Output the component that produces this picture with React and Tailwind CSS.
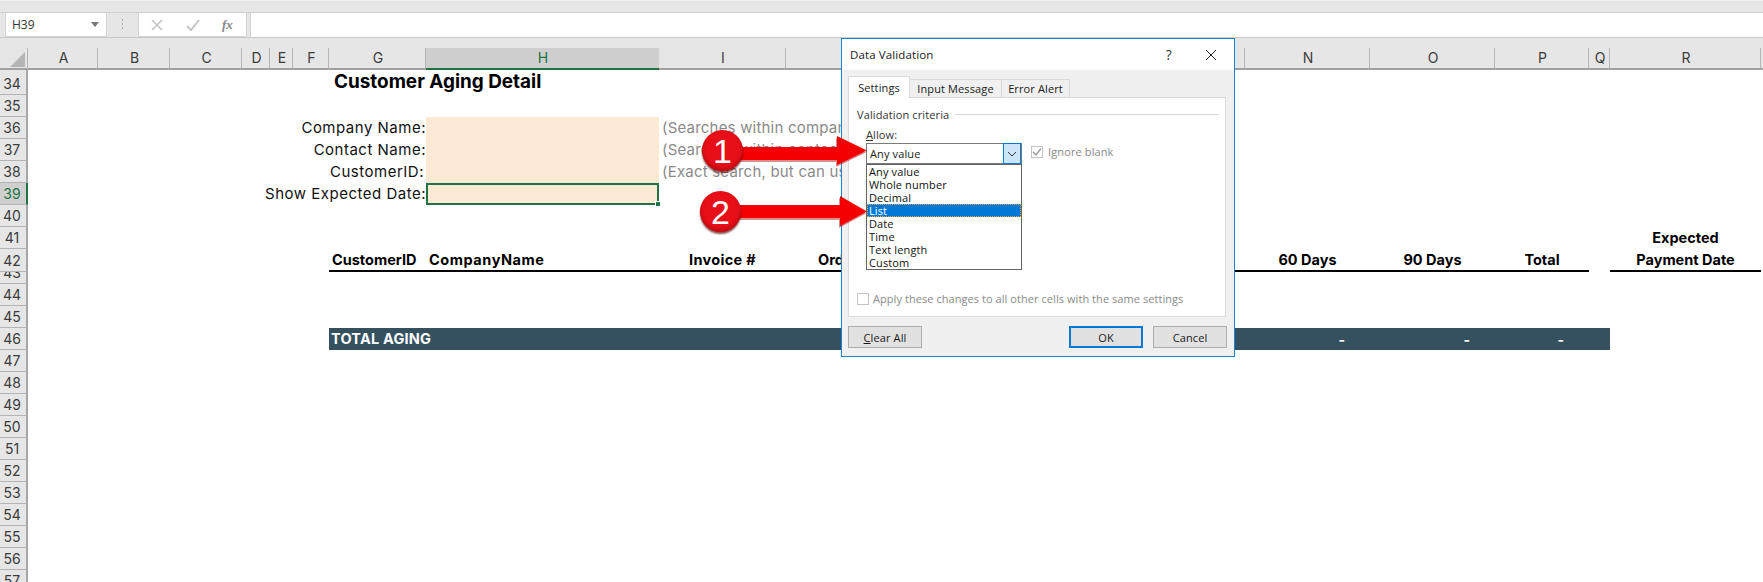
const COLS = [
  ["A", ""], ["B", ""], ["C", ""], ["D", ""], ["E", ""], ["F", ""], ["G", ""], ["H", "sel"], ["I", ""],
  ["J", ""], ["K", ""], ["L", ""], ["M", ""], ["N", ""], ["O", ""], ["P", ""], ["Q", ""], ["R", ""], ["", ""],
];
const ROWS = Array.from({ length: 24 }, (_, i) => 34 + i);
const sheetFont = "font-['Inter','Liberation_Sans',sans-serif]";
const dlgFont = "font-['Open_Sans','Liberation_Sans',sans-serif]";

function rowH(n) {
  if (n === 34) return "h-[25px]";
  if (n === 42) return "h-[23px]";
  if (n === 43) return "h-[12px]";
  return "h-[22px]";
}

function ColumnHeaders() {
  return (
    <div className="grid h-[22px] grid-cols-[28px_70px_72px_72px_28px_23px_36px_97px_233px_127px_124px_124px_124px_87px_125px_125px_94px_21px_151px_1fr] bg-[#e6e6e6]">
      <div className="relative border-r border-b-2 border-r-[#b4b4b4] border-b-[#a0a0a0]">
        <svg width="16" height="16" className="absolute left-[10px] top-[4px]">
          <polygon points="15,0 15,15 0,15" fill="#b4b4b4" />
        </svg>
      </div>
      {COLS.map(([c, s], i) => (
        <div
          key={i}
          className={
            s
              ? "flex items-center justify-center border-b-2 border-b-[#217346] bg-[#cfcfcf] pl-px text-[14px] leading-none text-[#217346]"
              : "flex items-center justify-center border-r border-b-2 border-r-[#b4b4b4] border-b-[#a0a0a0] pl-[2px] text-[14px] leading-none text-[#3c3c3c]"
          }
        >
          {c}
        </div>
      ))}
    </div>
  );
}

function RowHeaders() {
  return (
    <div className="flex w-[28px] shrink-0 flex-col">
      {ROWS.map((n) => (
        <div
          key={n}
          className={
            rowH(n) +
            " flex shrink-0 items-end justify-center overflow-hidden border-b border-b-[#b4b4b4] pr-[2px] text-[14px] leading-[21px] " +
            (n === 39
              ? "border-r-2 border-r-[#217346] bg-[#cfcfcf] text-[#217346]"
              : "border-r-2 border-r-[#a6a6a6] bg-[#e6e6e6] text-[#3c3c3c]")
          }
        >
          {n}
        </div>
      ))}
    </div>
  );
}

function Sheet() {
  const label = "col-start-2 col-span-6 flex items-center justify-end whitespace-nowrap text-[15px] tracking-[0.5px] text-[#111]";
  const hint = "col-start-9 col-span-3 flex items-center whitespace-nowrap pl-[3px] text-[15px] tracking-[0.2px] text-[#8a8a8a]";
  const head = "flex items-center justify-center whitespace-nowrap text-[14.5px] font-bold text-black";
  const dash = "flex items-center justify-end pr-[25px] text-[14px] font-bold text-white";
  return (
    <div className="grid flex-1 auto-rows-[22px] grid-cols-[70px_72px_72px_28px_23px_36px_97px_233px_127px_124px_124px_124px_87px_125px_125px_94px_21px_151px_1fr] grid-rows-[25px_22px_22px_22px_22px_22px_22px_22px_23px_12px_22px_22px_22px]">
      <div className="col-start-7 col-span-3 row-start-1 flex items-center whitespace-nowrap pl-[5px] text-[18.9px] font-bold text-black">
        Customer Aging Detail
      </div>

      <div className={label + " row-start-3"}>Company Name:</div>
      <div className="col-start-8 row-start-3 bg-[#fdead5]" />
      <div className={hint + " row-start-3"}>(Searches within company name)</div>

      <div className={label + " row-start-4"}>Contact Name:</div>
      <div className="col-start-8 row-start-4 bg-[#fdead5]" />
      <div className={hint + " row-start-4"}>(Searches within contact name)</div>

      <div className={label + " row-start-5 pr-[2px]"}>CustomerID:</div>
      <div className="col-start-8 row-start-5 bg-[#fdead5]" />
      <div className={hint + " row-start-5"}>(Exact search, but can use wildcards)</div>

      <div className={label + " row-start-6"}>Show Expected Date:</div>
      <div className="relative col-start-8 row-start-6 border-2 border-[#217346] bg-[#fdead5]">
        <div className="absolute -bottom-[4px] -right-[4px] h-[6px] w-[6px] border border-white bg-[#217346]" />
      </div>

      <div className="col-start-18 row-start-8 flex items-center justify-center text-[14.5px] font-bold text-black">Expected</div>

      <div className="col-start-7 col-span-10 row-start-9 grid grid-cols-subgrid border-b-2 border-b-black">
        <div className="flex items-center whitespace-nowrap pl-[3px] text-[14.5px] font-bold text-black">CustomerID</div>
        <div className="flex items-center whitespace-nowrap pl-[3px] text-[14.5px] tracking-[0.55px] font-bold text-black">CompanyName</div>
        <div className={head + " tracking-[0.3px]"}>Invoice #</div>
        <div className="flex items-center whitespace-nowrap pl-[32px] text-[14.5px] font-bold text-black">Order Date</div>
        <div className={head + " col-start-8"}>60 Days</div>
        <div className={head}>90 Days</div>
        <div className={head}>Total</div>
      </div>
      <div className={head + " col-start-18 row-start-9 border-b-2 border-b-black"}>Payment Date</div>

      <div className="col-start-7 col-span-11 row-start-13 grid grid-cols-subgrid bg-[#35505f]">
        <div className="col-span-2 flex items-center whitespace-nowrap pl-[2px] text-[14.5px] tracking-[0.2px] font-bold text-white">TOTAL AGING</div>
        <div className={dash + " col-start-8"}>-</div>
        <div className={dash}>-</div>
        <div className={dash}>-</div>
      </div>
    </div>
  );
}

function Tab({ children, active, w }) {
  return active ? (
    <div className={w + " relative z-10 flex h-[22px] items-center justify-center border border-b-0 border-[#d9d9d9] bg-white text-[#1a1a1a]"}>
      {children}
    </div>
  ) : (
    <div className={w + " flex h-[19px] items-center justify-center border border-l-0 border-[#d9d9d9] bg-[#f0f0f0] text-[#1a1a1a]"}>
      {children}
    </div>
  );
}

function Dialog() {
  const items = ["Any value", "Whole number", "Decimal", "List", "Date", "Time", "Text length", "Custom"];
  const btn = "flex h-[22px] w-[74px] items-center justify-center border border-[#adadad] bg-[#e1e1e1] text-[#1a1a1a]";
  return (
    <div className={dlgFont + " absolute left-[841px] top-[38px] z-20 flex h-[319px] w-[394px] flex-col border border-[#1883d7] bg-[#f0f0f0] text-[11px] leading-none tracking-[0.12px]"}>
      <div className="flex h-[31px] shrink-0 items-center bg-white pl-[8px] text-[#1a1a1a]">
        <span className="flex-1 text-[11.5px]">Data Validation</span>
        <span className="mr-[33px] text-[14px] text-[#333]">?</span>
        <svg width="12" height="12" viewBox="0 0 12 12" className="mr-[17px]">
          <path d="M1 1 L11 11 M11 1 L1 11" stroke="#222" strokeWidth="1" fill="none" />
        </svg>
      </div>
      <div className="ml-[6px] mt-[6px] flex items-end">
        <Tab active w="w-[62px]">Settings</Tab>
        <Tab w="w-[92px]">Input Message</Tab>
        <Tab w="w-[68px]">Error Alert</Tab>
      </div>
      <div className="relative -mt-px ml-[6px] flex h-[220px] w-[378px] flex-col border border-[#d9d9d9] bg-white">
        <div className="ml-[8px] mt-[9px] flex h-[14px] items-center text-[#333]">
          <span>Validation criteria</span>
          <div className="ml-[6px] mr-[6px] h-px flex-1 bg-[#d9d9d9]" />
        </div>
        <div className="ml-[17px] mt-[6px] flex h-[14px] items-center text-[#333]">
          <span><span className="underline">A</span>llow:</span>
        </div>
        <div className="ml-[17px] mt-[2px] flex items-start">
          <div className="relative flex h-[21px] w-[156px] items-center border border-[#7a7a7a] pl-[3px] text-[#1a1a1a]">
            <span className="flex-1">Any value</span>
            <div className="flex h-[21px] w-[18px] items-center justify-center border border-[#0078d7] bg-[#cde6f7]">
              <svg width="10" height="6" viewBox="0 0 10 6">
                <path d="M1 1 L5 5 L9 1" stroke="#333" strokeWidth="1" fill="none" />
              </svg>
            </div>
            <div className="absolute -left-px top-[20px] z-10 flex h-[106px] w-[156px] flex-col border border-[#646464] bg-white">
              {items.map((t) =>
                t === "List" ? (
                  <div key={t} className="flex h-[13px] items-center border border-dotted border-[#e8a33d] bg-[#0078d7] pl-px text-white">
                    {t}
                  </div>
                ) : (
                  <div key={t} className="flex h-[13px] items-center pl-[2px] text-[#111]">
                    {t}
                  </div>
                )
              )}
            </div>
          </div>
          <div className="ml-[9px] mt-[2px] flex h-[13px] items-center text-[#8a8a8a]">
            <div className="mr-[5px] flex h-[12px] w-[12px] items-center justify-center border border-[#c4c4c4]">
              <svg width="10" height="10" viewBox="0 0 10 10">
                <path d="M1 5 L4 8 L9 1.5" stroke="#9a9a9a" strokeWidth="1.3" fill="none" />
              </svg>
            </div>
            <span>Ignore blank</span>
          </div>
        </div>
        <div className="mb-[11px] ml-[8px] mt-auto flex h-[13px] items-center tracking-[0.06px] text-[#8a8a8a]">
          <div className="mr-[4px] h-[12px] w-[12px] border border-[#c4c4c4]" />
          <span>Apply these changes to all other cells with the same settings</span>
        </div>
      </div>
      <div className="ml-[6px] mt-[9px] flex">
        <div className={btn}><span><span className="underline">C</span>lear All</span></div>
        <div className="ml-[147px] flex h-[22px] w-[74px] items-center justify-center border-2 border-[#0078d7] bg-[#e1e1e1] text-[#1a1a1a]">OK</div>
        <div className={btn + " ml-[10px]"}>Cancel</div>
      </div>
    </div>
  );
}

function Callout({ n, className, shaft }) {
  return (
    <div className={"absolute z-30 " + className}>
      <svg width="170" height="46" viewBox="0 0 170 46" className="absolute left-0 top-0">
        <polygon points={shaft} fill="#a80000" transform="translate(-1 2)" opacity="0.45" />
        <polygon points={shaft} fill="#f50000" />
      </svg>
      <div className="absolute left-0 top-[2px] flex h-[41px] w-[41px] items-center justify-center rounded-full bg-[#e80f18] text-[34px] leading-none text-white shadow-[0_2px_2px_rgba(90,0,0,0.7),inset_0_-2px_4px_rgba(110,0,0,0.4)] font-['Liberation_Sans',sans-serif]">
        {n}
      </div>
    </div>
  );
}

export default function App() {
  return (
    <div className={sheetFont + " relative h-[582px] w-[1763px] overflow-hidden bg-white"}>
      <div className="h-[13px] border-t border-b border-t-[#efefef] border-b-[#cfcfcf] bg-[#e6e6e6]" />
      <div className="flex h-[25px] items-stretch border-b border-b-[#c8c8c8] bg-[#e6e6e6] pl-[5px]">
        <div className="flex w-[102px] items-center border border-[#d4d4d4] border-t-0 bg-white pl-[6px] pr-[7px] text-[12px] text-[#333] font-['Open_Sans',sans-serif]">
          <span className="flex-1">H39</span>
          <svg width="8" height="5" viewBox="0 0 8 5"><polygon points="0,0 8,0 4,5" fill="#777" /></svg>
        </div>
        <div className="flex w-[31px] items-center justify-center">
          <svg width="3" height="12" viewBox="0 0 3 12"><path d="M1 1h1M1 5h1M1 9h1" stroke="#b0b0b0" strokeWidth="2" /></svg>
        </div>
        <div className="flex w-[109px] items-center border border-[#d4d4d4] border-t-0 bg-white">
          <svg width="12" height="12" viewBox="0 0 12 12" className="ml-[12px]"><path d="M1 1 L11 11 M11 1 L1 11" stroke="#c4c4c4" strokeWidth="1.6" /></svg>
          <svg width="14" height="12" viewBox="0 0 14 12" className="ml-[23px]"><path d="M1 7 L5 11 L13 1" stroke="#c4c4c4" strokeWidth="2" fill="none" /></svg>
          <span className="ml-[22px] font-['Liberation_Serif',serif] text-[13px] font-bold italic text-[#8a8a8a]">fx</span>
        </div>
        <div className="ml-[3px] flex-1 border-l border-l-[#d4d4d4] bg-white" />
      </div>
      <div className="h-[10px] bg-[#e6e6e6]" />
      <ColumnHeaders />
      <div className="flex">
        <RowHeaders />
        <Sheet />
      </div>
      <Dialog />
      <Callout n="1" className="left-[702px] top-[128px] h-[46px] w-[170px]" shaft="30,19 135,19 135,8 165,22.5 135,37 135,32 30,32" />
      <Callout n="2" className="left-[700px] top-[189px] h-[46px] w-[170px]" shaft="30,16 140,16 140,7 167,22.5 140,37 140,29 30,29" />
    </div>
  );
}
